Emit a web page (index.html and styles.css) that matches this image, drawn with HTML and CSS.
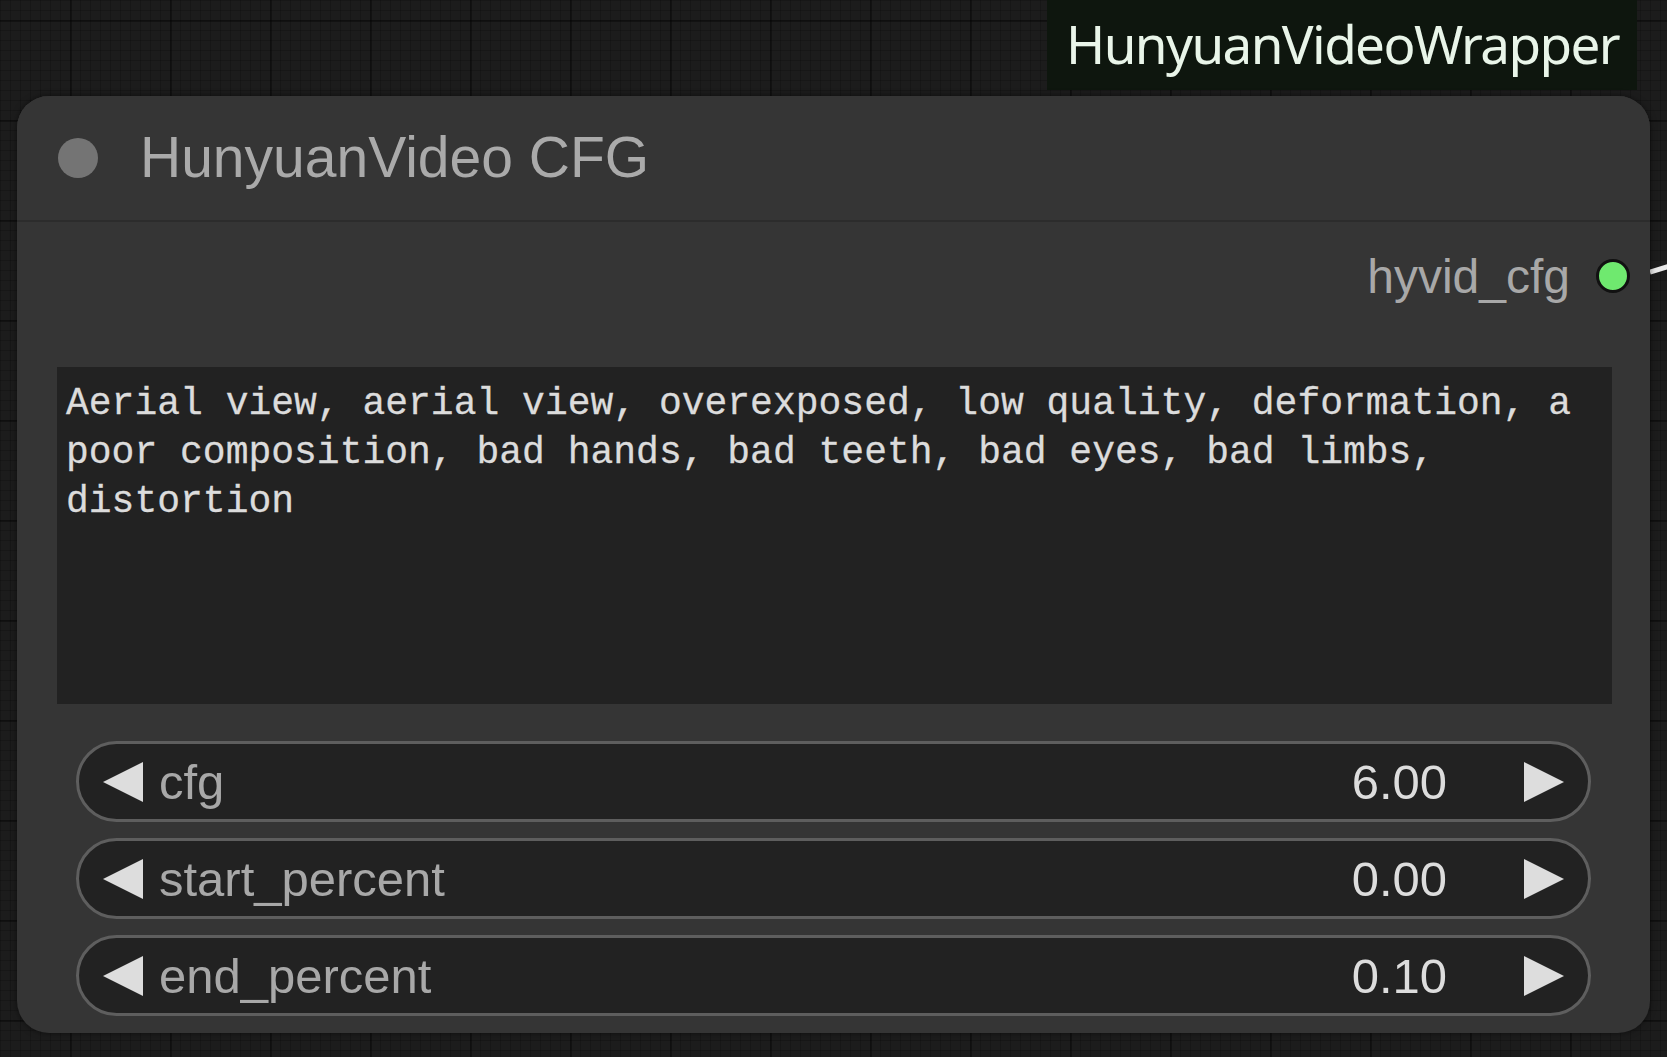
FILE: index.html
```html
<!DOCTYPE html>
<html>
<head>
<meta charset="utf-8">
<link rel="stylesheet" href="styles.css">
</head>
<body>
<div class="canvas">
  <div class="badge">HunyuanVideoWrapper</div>
  <svg class="link" width="20" height="20" viewBox="0 0 20 20"><path d="M0 14 L20 8" stroke="#e8e8e8" stroke-width="5" fill="none"/></svg>
  <div class="node">
    <div class="title">
      <span class="title-dot"></span>
      <span class="title-text">HunyuanVideo CFG</span>
    </div>
    <div class="outputs">
      <span class="out-label">hyvid_cfg</span>
      <span class="out-dot"></span>
    </div>
    <div class="prompt">Aerial view, aerial view, overexposed, low quality, deformation, a<br>poor composition, bad hands, bad teeth, bad eyes, bad limbs,<br>distortion</div>
    <div class="widgets">
      <div class="widget">
        <span class="arrow-left"></span>
        <span class="w-label">cfg</span>
        <span class="w-value">6.00</span>
        <span class="arrow-right"></span>
      </div>
      <div class="widget">
        <span class="arrow-left"></span>
        <span class="w-label">start_percent</span>
        <span class="w-value">0.00</span>
        <span class="arrow-right"></span>
      </div>
      <div class="widget">
        <span class="arrow-left"></span>
        <span class="w-label">end_percent</span>
        <span class="w-value">0.10</span>
        <span class="arrow-right"></span>
      </div>
    </div>
  </div>
</div>
</body>
</html>
```
FILE: styles.css
```css
html, body {
  margin: 0;
  padding: 0;
}
body {
  width: 1667px;
  height: 1057px;
  overflow: hidden;
  background-color: #1c1c1c;
  background-image:
    linear-gradient(to right, rgba(0,0,0,0.35) 2px, transparent 2px),
    linear-gradient(to bottom, rgba(0,0,0,0.35) 2px, transparent 2px),
    linear-gradient(to right, rgba(0,0,0,0.18) 1px, transparent 1px),
    linear-gradient(to bottom, rgba(0,0,0,0.18) 1px, transparent 1px);
  background-size: 100px 100px, 100px 100px, 10px 10px, 10px 10px;
  background-position: 70px 0, 0 20px, 0 0, 0 0;
  font-family: "Liberation Sans", Arial, sans-serif;
}
.canvas {
  position: relative;
  width: 1667px;
  height: 1057px;
  padding-top: 96px;
  padding-left: 17px;
  box-sizing: border-box;
}
.badge {
  position: absolute;
  left: 1047px;
  top: 0;
  width: 590px;
  height: 90px;
  box-sizing: border-box;
  padding-left: 19px;
  background: #0e160e;
  color: #e9f5e9;
  font-family: "Noto Sans", "Open Sans", sans-serif;
  font-size: 53px;
  line-height: 88px;
  letter-spacing: -1.6px;
  white-space: nowrap;
}
.link {
  position: absolute;
  left: 1650px;
  top: 258px;
}
.node {
  position: relative;
  width: 1633px;
  height: 937px;
  background: #353535;
  border-radius: 32px;
  overflow: hidden;
  box-shadow: 0 0 6px rgba(0,0,0,0.5);
  display: flex;
  flex-direction: column;
}
.title {
  height: 124px;
  border-bottom: 2px solid #2c2c2c;
  display: flex;
  align-items: center;
  padding-left: 41px;
  gap: 42px;
  background: #353535;
}
.title-dot {
  width: 40px;
  height: 40px;
  border-radius: 50%;
  background: #747474;
  flex: none;
}
.title-text {
  color: #aaaaaa;
  font-size: 57px;
  margin-top: -2px;
}
.outputs {
  height: 108px;
  display: flex;
  align-items: center;
  justify-content: flex-end;
  padding-right: 20px;
  gap: 26px;
}
.out-label {
  color: #a8a8a8;
  font-size: 48px;
  margin-top: 0;
}
.out-dot {
  width: 28px;
  height: 28px;
  border-radius: 50%;
  background: #6fe96f;
  border: 3px solid #111;
  flex: none;
}
.prompt {
  margin: 37px 38px 0 40px;
  height: 337px;
  box-sizing: border-box;
  padding: 12px 9px 0 9px;
  background: #222222;
  color: #dcdcdc;
  font-family: "Liberation Mono", "Courier New", monospace;
  font-size: 38px;
  line-height: 49px;
  white-space: nowrap;
  -webkit-text-stroke: 0.3px #dcdcdc;
}
.widgets {
  margin: 37px 59px 0 59px;
  display: flex;
  flex-direction: column;
  gap: 16px;
}
.widget {
  height: 81px;
  box-sizing: border-box;
  border: 3px solid #5e5e5e;
  border-radius: 41px;
  background: #222222;
  display: flex;
  align-items: center;
  padding: 0 24px;
}
.arrow-left {
  width: 0;
  height: 0;
  border-top: 20px solid transparent;
  border-bottom: 20px solid transparent;
  border-right: 40px solid #dddddd;
  flex: none;
}
.arrow-right {
  width: 0;
  height: 0;
  border-top: 20px solid transparent;
  border-bottom: 20px solid transparent;
  border-left: 40px solid #dddddd;
  flex: none;
}
.w-label {
  margin-left: 16px;
  color: #a8a8a8;
  font-size: 49px;
  flex: 1;
}
.w-value {
  color: #dddddd;
  font-size: 49px;
  margin-right: 77px;
}
```
